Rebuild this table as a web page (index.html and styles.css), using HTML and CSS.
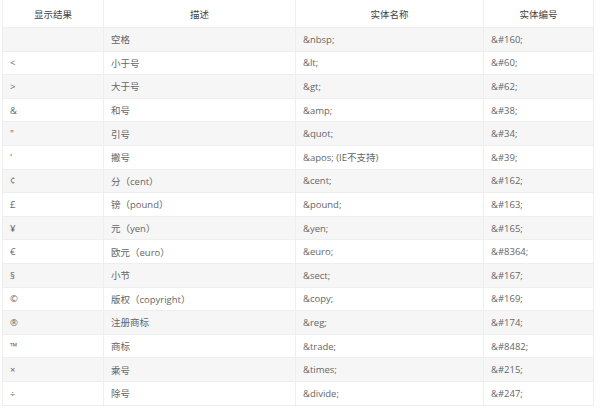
FILE: index.html
```html
<!DOCTYPE html>
<html lang="zh">
<head>
<meta charset="utf-8">
<link rel="stylesheet" href="styles.css">
</head>
<body>
<table class="ent">
  <colgroup>
    <col class="c1"><col class="c2"><col class="c3"><col class="c4">
  </colgroup>
  <thead>
    <tr><th>显示结果</th><th>描述</th><th>实体名称</th><th>实体编号</th></tr>
  </thead>
  <tbody>
    <tr><td>&nbsp;</td><td>空格</td><td>&amp;nbsp;</td><td>&amp;#160;</td></tr>
    <tr><td>&lt;</td><td>小于号</td><td>&amp;lt;</td><td>&amp;#60;</td></tr>
    <tr><td>&gt;</td><td>大于号</td><td>&amp;gt;</td><td>&amp;#62;</td></tr>
    <tr><td>&amp;</td><td>和号</td><td>&amp;amp;</td><td>&amp;#38;</td></tr>
    <tr><td>"</td><td>引号</td><td>&amp;quot;</td><td>&amp;#34;</td></tr>
    <tr><td>'</td><td>撇号</td><td>&amp;apos; (IE不支持)</td><td>&amp;#39;</td></tr>
    <tr><td>¢</td><td>分（cent）</td><td>&amp;cent;</td><td>&amp;#162;</td></tr>
    <tr><td>£</td><td>镑（pound）</td><td>&amp;pound;</td><td>&amp;#163;</td></tr>
    <tr><td>¥</td><td>元（yen）</td><td>&amp;yen;</td><td>&amp;#165;</td></tr>
    <tr><td>€</td><td>欧元（euro）</td><td>&amp;euro;</td><td>&amp;#8364;</td></tr>
    <tr><td>§</td><td>小节</td><td>&amp;sect;</td><td>&amp;#167;</td></tr>
    <tr><td>©</td><td>版权（copyright）</td><td>&amp;copy;</td><td>&amp;#169;</td></tr>
    <tr><td>®</td><td>注册商标</td><td>&amp;reg;</td><td>&amp;#174;</td></tr>
    <tr><td>™</td><td>商标</td><td>&amp;trade;</td><td>&amp;#8482;</td></tr>
    <tr><td>×</td><td>乘号</td><td>&amp;times;</td><td>&amp;#215;</td></tr>
    <tr><td>÷</td><td>除号</td><td>&amp;divide;</td><td>&amp;#247;</td></tr>
  </tbody>
</table>
</body>
</html>
```
FILE: styles.css
```css
html, body {
  margin: 0;
  padding: 0;
  background: #fff;
}
body {
  font-family: "Open Sans", "Noto Sans CJK SC", sans-serif;
  font-size: 9.5px;
  color: #666;
}
.ent {
  margin-left: 2px;
  width: 591px;
  border-collapse: collapse;
  table-layout: fixed;
}
.c1 { width: 101px; }
.c2 { width: 192px; }
.c3 { width: 188px; }
.c4 { width: 110px; }
.ent th, .ent td {
  border: 1px solid #eeeeee;
  padding: 0 7px;
  white-space: nowrap;
  overflow: hidden;
}
.ent th {
  height: 27px;
  font-weight: normal;
  color: #444;
  text-align: center;
  border-top: none;
}
.ent td {
  height: 22.6px;
  text-align: left;
}
.ent .sym {
  font-size: 8px;
}
.ent tbody tr:nth-child(odd) td {
  background: #f6f6f6;
}
```
